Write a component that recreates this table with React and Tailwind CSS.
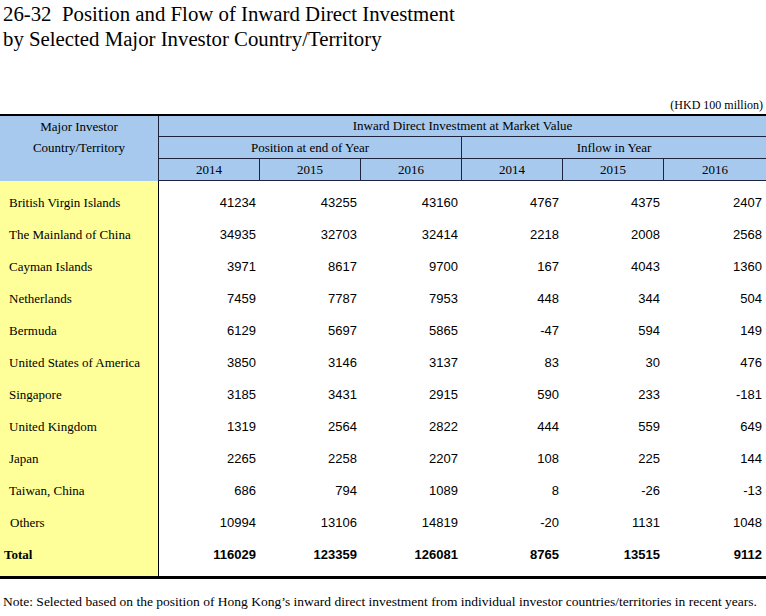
import React from 'react';

const rows = [
  ['British Virgin Islands', 41234, 43255, 43160, 4767, 4375, 2407],
  ['The Mainland of China', 34935, 32703, 32414, 2218, 2008, 2568],
  ['Cayman Islands', 3971, 8617, 9700, 167, 4043, 1360],
  ['Netherlands', 7459, 7787, 7953, 448, 344, 504],
  ['Bermuda', 6129, 5697, 5865, -47, 594, 149],
  ['United States of America', 3850, 3146, 3137, 83, 30, 476],
  ['Singapore', 3185, 3431, 2915, 590, 233, -181],
  ['United Kingdom', 1319, 2564, 2822, 444, 559, 649],
  ['Japan', 2265, 2258, 2207, 108, 225, 144],
  ['Taiwan, China', 686, 794, 1089, 8, -26, -13],
  ['Others', 10994, 13106, 14819, -20, 1131, 1048],
];
const total = ['Total', 116029, 123359, 126081, 8765, 13515, 9112];

const serif = "font-['Liberation_Serif','Times_New_Roman',serif]";
const sans = "font-['Liberation_Sans',Arial,sans-serif]";
const cols = 'grid-cols-[159px_101px_101px_101px_101px_101px_1fr]';

function Row({ r, bold }) {
  return (
    <div className={`grid ${cols} h-[32px] items-center`}>
      <div className={`${serif} text-[13px] h-full flex items-center bg-[#ffff99] border-r border-black ${bold ? 'font-bold pl-[4px]' : r[0] === 'Others' ? 'pl-[10px]' : 'pl-[9px]'}`}>
        {r[0]}
      </div>
      {r.slice(1).map((v, i) => (
        <div key={i} className={`${sans} text-[13px] text-right pr-[4px] ${bold ? 'font-bold' : ''}`}>
          {v}
        </div>
      ))}
    </div>
  );
}

export default function App() {
  const years = ['2014', '2015', '2016', '2014', '2015', '2016'];
  return (
    <div className={`w-[766px] h-[616px] bg-white text-black ${serif} overflow-hidden`}>
      <div className="pl-[3px] pt-[1px] text-[20.8px] leading-[25px]">
        <div>26-32&nbsp; Position and Flow of Inward Direct Investment</div>
        <div>by Selected Major Investor Country/Territory</div>
      </div>
      <div className="mt-[47px] mb-[2px] text-right pr-[3px] text-[12px] leading-[14px]">(HKD 100 million)</div>
      <div className="border-t-2 border-black">
        <div className={`grid ${cols} grid-rows-[21px_22px_22px] bg-[#a7c9ee] text-[13px] text-center`}>
          <div className="row-span-3 col-start-1 border-r border-[#1c2440] leading-[21px] pt-0">
            <div>Major Investor</div>
            <div>Country/Territory</div>
          </div>
          <div className="col-span-6 border-b border-[#1c2440] flex items-center justify-center">
            Inward Direct Investment at Market Value
          </div>
          <div className="col-span-3 border-b border-r border-[#1c2440] flex items-center justify-center">
            Position at end of Year
          </div>
          <div className="col-span-3 border-b border-[#1c2440] flex items-center justify-center">
            Inflow in Year
          </div>
          {years.map((y, i) => (
            <div
              key={i}
              className={`border-b border-[#1c2440] flex items-center justify-center ${i < 5 ? 'border-r' : ''}`}
            >
              {y}
            </div>
          ))}
        </div>
        <div>
          <div className={`grid ${cols} h-[6px]`}>
            <div className="bg-[#ffff99] border-r border-black" />
          </div>
          {rows.map((r) => (
            <Row key={r[0]} r={r} />
          ))}
          <Row r={total} bold />
          <div className={`grid ${cols} h-[5px]`}>
            <div className="bg-[#ffff99] border-r border-black" />
          </div>
        </div>
      </div>
      <div className="border-t-[3px] border-black" />
      <div className="pl-[3px] pt-[15px] text-[13.5px] leading-[15px]">
        Note: Selected based on the position of Hong Kong’s inward direct investment from individual investor countries/territories in recent years.
      </div>
    </div>
  );
}
